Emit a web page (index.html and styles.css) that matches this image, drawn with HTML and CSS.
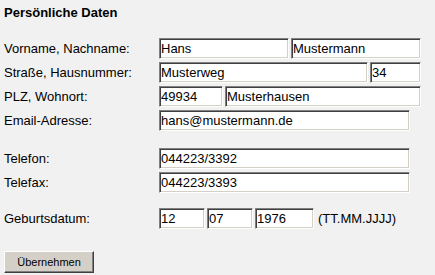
FILE: index.html
```html
<!DOCTYPE html>
<html lang="de">
<head>
    <meta charset="UTF-8">
    <meta name="viewport" content="width=device-width, initial-scale=1.0">
    <title>Persönliche Daten</title>
    <link rel="stylesheet" href="styles.css">
</head>
<body>
    <h1 class="title">Persönliche Daten</h1>

    <form class="data-form">
        <!-- Name und Anschrift -->
        <div class="row">
            <label class="label" for="vorname">Vorname, Nachname:</label>
            <input class="field w-name" type="text" id="vorname" value="Hans">
            <input class="field w-name" type="text" id="nachname" value="Mustermann">
        </div>
        <div class="row">
            <label class="label" for="strasse">Straße, Hausnummer:</label>
            <input class="field w-street" type="text" id="strasse" value="Musterweg">
            <input class="field w-house" type="text" id="hausnr" value="34">
        </div>
        <div class="row">
            <label class="label" for="plz">PLZ, Wohnort:</label>
            <input class="field w-plz" type="text" id="plz" value="49934">
            <input class="field w-city" type="text" id="ort" value="Musterhausen">
        </div>
        <div class="row">
            <label class="label" for="email">Email-Adresse:</label>
            <input class="field w-long" type="text" id="email" value="hans@mustermann.de">
        </div>

        <!-- Telefon -->
        <div class="row row-phone">
            <label class="label" for="telefon">Telefon:</label>
            <input class="field w-long" type="text" id="telefon" value="044223/3392">
        </div>
        <div class="row">
            <label class="label" for="telefax">Telefax:</label>
            <input class="field w-long" type="text" id="telefax" value="044223/3393">
        </div>

        <!-- Geburtsdatum -->
        <div class="row row-date">
            <label class="label" for="tag">Geburtsdatum:</label>
            <input class="field w-day" type="text" id="tag" value="12">
            <input class="field w-day" type="text" id="monat" value="07">
            <input class="field w-year" type="text" id="jahr" value="1976">
            <span class="hint">(TT.MM.JJJJ)</span>
        </div>

        <button class="submit" type="submit">Übernehmen</button>
    </form>
</body>
</html>
```

FILE: styles.css
```css
body {
    margin: 0;
    padding: 5px 4px;
    font-family: "Liberation Sans", Arial, sans-serif;
    font-size: 13px;
    color: #000;
    background-color: #f1f1f1; /* light gray page */
}
.title {
    margin: 0 0 18px 0;
    font-size: 13px;
    line-height: 15px;
    font-weight: bold;
}
.row {
    display: flex;
    align-items: center;
    gap: 2px;
    margin-bottom: 3px;
}
/* margins collapse with the 3px above, so these are the full gaps */
.row-phone {
    margin-top: 17px;
}
.row-date {
    margin-top: 15px;
    margin-bottom: 22px;
}
.label {
    width: 153px;
    flex: none;
}
.field {
    box-sizing: border-box;
    height: 21px;
    margin: 0;
    padding: 0 1px;
    font-family: "Liberation Sans", Arial, sans-serif;
    font-size: 13px;
    color: #000;
    background: #fff;
    border: 1px solid;
    border-color: #808080 #fff #fff #808080;
    box-shadow: inset 1px 1px #404040, inset -1px -1px #d4d0c8;
    outline: none;
}
.w-name { width: 130px; }
.w-street { width: 209px; }
.w-house { width: 51px; }
.w-plz { width: 64px; }
.w-city { width: 196px; }
.w-long { width: 251px; }
.w-day { width: 46px; }
.w-year { width: 59px; }
.hint {
    margin-left: 2px;
}
.submit {
    box-sizing: border-box;
    width: 90px;
    height: 22px;
    padding: 0;
    font-family: "Liberation Sans", Arial, sans-serif;
    font-size: 11px;
    color: #000;
    background: #d4d0c8;
    border: 1px solid;
    border-color: #fff #404040 #404040 #fff;
    box-shadow: inset -1px -1px #808080;
}
```
